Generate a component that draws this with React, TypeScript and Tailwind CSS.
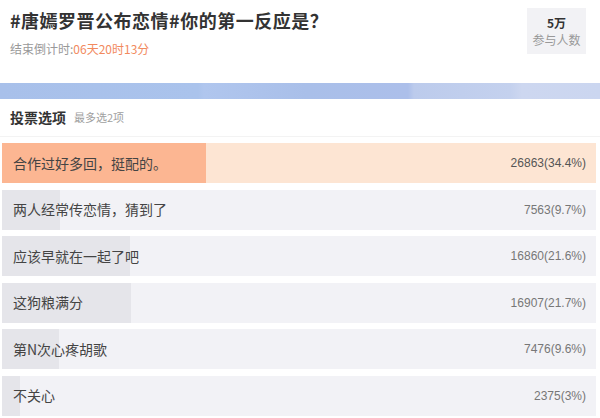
import React from "react";

const options = [
  { label: "合作过好多回，挺配的。", count: "26863(34.4%)", pct: 34.4, hot: true },
  { label: "两人经常传恋情，猜到了", count: "7563(9.7%)", pct: 9.7 },
  { label: "应该早就在一起了吧", count: "16860(21.6%)", pct: 21.6 },
  { label: "这狗粮满分", count: "16907(21.7%)", pct: 21.7 },
  { label: "第N次心疼胡歌", count: "7476(9.6%)", pct: 9.6 },
  { label: "不关心", count: "2375(3%)", pct: 3 },
];

const cjk = "font-['Microsoft_YaHei','Noto_Sans_CJK_SC',sans-serif]";

export default function App() {
  return (
    <div className={`w-[600px] h-[418px] bg-white overflow-hidden ${cjk}`}>
      <div className="flex justify-between h-[83px]">
        <div className="pl-[10px] pt-[7px]">
          <div className="text-[18px] leading-[26px] font-bold text-[#333] tracking-[0.5px]">
            #唐嫣罗晋公布恋情#你的第一反应是？
          </div>
          <div className="mt-[8px] text-[12px] leading-[16px] text-[#999]">
            结束倒计时:<span className="text-[#f28a5e]">06天20时13分</span>
          </div>
        </div>
        <div className="mr-[14px] mt-[8px] w-[59px] h-[46px] bg-[#f2f2f5] flex flex-col items-center justify-center">
          <div className="text-[12px] leading-[16px] font-bold text-[#333]">5万</div>
          <div className="text-[12px] leading-[17px] text-[#999]">参与人数</div>
        </div>
      </div>
      <div className="h-[16px] bg-[linear-gradient(90deg,#a8c0ea_0%,#aac3ec_33%,#b0c6ee_34%,#a9bfe9_51%,#acbfea_68%,#bccbec_69%,#c4d1ee_85%,#cdd7f0_87%,#cbd6f0_100%)]" />
      <div className="h-[38px] flex items-center pl-[10px] border-b border-[#f3f3f3]">
        <span className="text-[14px] font-bold text-[#333]">投票选项</span>
        <span className="ml-[8px] text-[11px] text-[#a0a0a0]">最多选2项</span>
      </div>
      <div className="flex flex-col gap-[6.5px] pt-[6px] pl-[2px] pr-[4px]">
        {options.map((o) => (
          <div
            key={o.label}
            className={`relative h-[40px] flex items-center justify-between ${o.hot ? "bg-[#fde5d3]" : "bg-[#f2f2f6]"}`}
          >
            <div
              className={`absolute left-0 top-0 bottom-0 ${o.hot ? "bg-[#fcb692]" : "bg-[#e5e5ea]"}`}
              style={{ width: `${o.pct}%` }}
            />
            <span className="relative pl-[11px] text-[14px] text-[#444]">{o.label}</span>
            <span
              className={`relative pr-[10px] text-[12px] font-['Liberation_Sans',sans-serif] ${o.hot ? "text-[#555]" : "text-[#777]"}`}
            >
              {o.count}
            </span>
          </div>
        ))}
      </div>
    </div>
  );
}
